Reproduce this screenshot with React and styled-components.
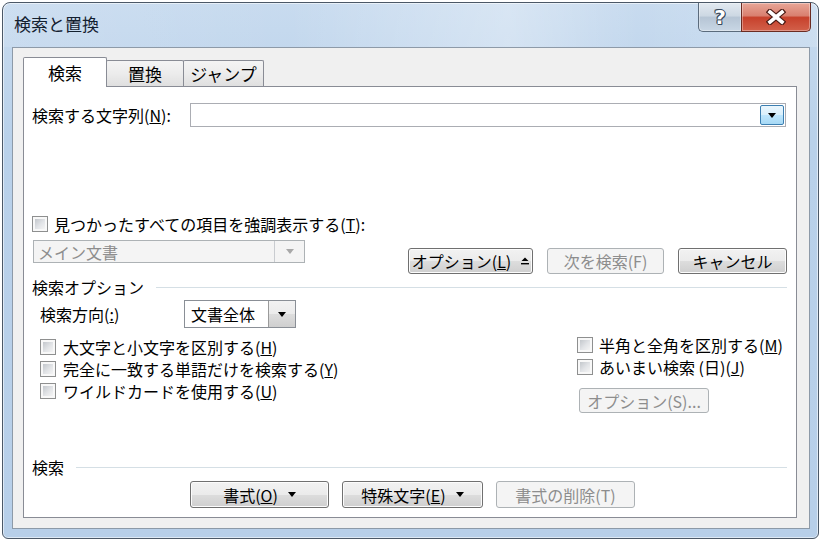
import React from 'react'
import styled, { createGlobalStyle } from 'styled-components'

const GlobalStyle = createGlobalStyle`
  html, body { margin:0; padding:0; background:#fff; }
  body {
    font-family: "Noto Sans CJK JP", "Noto Sans", sans-serif;
    font-size:16px;
    color:#000;
  }
  * { box-sizing:border-box; }
`

const Window = styled.div`
  margin:2px 0 0 2px;
  width:817px;
  height:537px;
  border:1px solid #4b5867;
  border-radius:8px 8px 6px 6px;
  background:linear-gradient(180deg, #c8dbef 0%, #b9d1ea 25%, #b7cfe9 100%);
  box-shadow:inset 0 0 0 1px rgba(255,255,255,0.55);
  display:flex;
  flex-direction:column;
  overflow:hidden;
`
const TitleBar = styled.div`
  height:44px;
  flex:none;
  display:flex;
  align-items:flex-start;
  justify-content:space-between;
  padding:0 7px 0 11px;
  background:linear-gradient(90deg, rgba(255,255,255,0.1) 0%, rgba(255,255,255,0) 35%, rgba(255,255,255,0.3) 62%, rgba(255,255,255,0) 78%, rgba(255,255,255,0.15) 100%);
`
const Title = styled.div`
  margin-top:8px;
  font-size:17px;
  line-height:26px;
  color:#13202f;
`
const CaptionButtons = styled.div`
  display:flex;
`
const CaptionButton = styled.div`
  width:${p => p.$w}px;
  height:29px;
  display:flex;
  align-items:center;
  justify-content:center;
  border:1px solid ${p => p.$close ? '#6b2b22' : '#5b6b7c'};
  border-top:none;
  border-radius:${p => p.$close ? '0 0 5px 0' : '0 0 0 5px'};
  background:${p => p.$close
    ? 'linear-gradient(180deg, #e8a697 0%, #d98070 45%, #c7412c 52%, #d2604a 100%)'
    : 'linear-gradient(180deg, #e2e9f0 0%, #cdd8e3 45%, #b6c5d5 52%, #c9d7e5 100%)'};
  box-shadow:inset 0 0 0 1px rgba(255,255,255,0.35);
  ${p => !p.$close && 'border-right:none;'}
`
const HelpGlyph = styled.span`
  font-family:"DejaVu Sans", sans-serif;
  font-weight:bold;
  font-size:20px;
  line-height:22px;
  color:#fff;
  text-shadow:1px 0 0 #3b4a5c, -1px 0 0 #3b4a5c, 0 1px 0 #3b4a5c, 0 -1px 0 #3b4a5c, 1px 1px 0 #3b4a5c, -1px -1px 0 #3b4a5c;
`

const DialogBody = styled.div`
  flex:1;
  margin:0 8px 9px 9px;
  background:#f0f0f0;
  border:1px solid #8d9aa8;
  padding:9px 12px 10px 10px;
  display:flex;
  flex-direction:column;
`
const TabStrip = styled.div`
  display:flex;
  align-items:flex-end;
  height:30px;
  margin-bottom:-1px;
  position:relative;
  z-index:1;
`
const Tab = styled.div`
  width:${p => p.$w}px;
  height:${p => p.$active ? 30 : 26}px;
  margin-bottom:${p => p.$active ? 0 : 1}px;
  margin-left:${p => p.$first ? 0 : -1}px;
  border:1px solid #898c95;
  border-bottom:none;
  border-radius:2px 2px 0 0;
  background:${p => p.$active ? '#fff' : 'linear-gradient(180deg, #f4f4f4 0%, #ececec 50%, #dfdfdf 100%)'};
  position:relative;
  z-index:${p => p.$active ? 2 : 1};
  display:flex;
  align-items:center;
  justify-content:center;
  font-size:17px;
  line-height:24px;
  padding-top:${p => p.$active ? 0 : 1}px;
`
const TabPanel = styled.div`
  flex:1;
  background:#fff;
  border:1px solid #898c95;
  padding:16px 9px 9px 8px;
  display:flex;
  flex-direction:column;
`

const SearchRow = styled.div`
  display:flex;
  align-items:center;
  height:24px;
`
const FieldLabel = styled.div`
  width:${p => p.$w}px;
  flex:none;
  line-height:24px;
  white-space:nowrap;
`
const TextField = styled.div`
  flex:1;
  height:24px;
  margin-right:1px;
  border:1px solid #abadb3;
  background:#fff;
  display:flex;
  justify-content:flex-end;
  padding:1px;
`
const DropButton = styled.div`
  width:${p => p.$w}px;
  flex:none;
  display:flex;
  align-items:center;
  justify-content:center;
  ${p => p.$hot && `
    border:1px solid #3c7fb1;
    border-radius:2px;
    background:linear-gradient(180deg, #eaf6fd 0%, #d9f0fc 50%, #bee6fd 51%, #a7d9f5 100%);
  `}
  ${p => p.$plain && `
    border-left:1px solid #9a9a9a;
    background:linear-gradient(180deg, #f2f2f2 0%, #ebebeb 50%, #dddddd 51%, #cfcfcf 100%);
  `}
  ${p => p.$disabled && `
    border-left:1px solid #c9ccd0;
    background:#f4f4f4;
  `}
`

const CheckRow = styled.div`
  display:flex;
  align-items:center;
  gap:${p => p.$gap || 6}px;
  height:${p => p.$h || 22}px;
  margin-top:${p => p.$mt || 0}px;
  white-space:nowrap;
  line-height:20px;
`
const CheckBox = styled.span`
  width:16px;
  height:16px;
  flex:none;
  border:1px solid #8e8f8f;
  padding:2px;
  background:linear-gradient(135deg, #c3c7cc 0%, #e2e4e7 55%, #f4f4f4 100%) content-box, #f8f8f8;
`

const ComboRow = styled.div`
  display:flex;
  justify-content:space-between;
  align-items:flex-start;
  margin-top:6px;
`
const Combo = styled.div`
  width:${p => p.$w}px;
  height:${p => p.$h}px;
  margin-left:${p => p.$ml || 0}px;
  display:flex;
  border:1px solid ${p => p.$disabled ? '#adb2b5' : '#8a8f96'};
  background:${p => p.$disabled ? '#f4f4f4' : '#fff'};
  color:${p => p.$disabled ? '#8d8d8d' : '#000'};
`
const ComboText = styled.div`
  flex:1;
  display:flex;
  align-items:center;
  padding-left:${p => p.$pl || 4}px;
  line-height:20px;
`

const ButtonGroup = styled.div`
  display:flex;
  gap:${p => p.$gap || 14}px;
  margin-top:${p => p.$mt || 0}px;
  padding-left:${p => p.$pl || 0}px;
`
const PushButton = styled.div`
  width:${p => p.$w}px;
  height:${p => p.$h || 26}px;
  flex:none;
  display:flex;
  align-items:center;
  justify-content:center;
  gap:10px;
  border:1px solid ${p => p.$disabled ? '#adb2b5' : '#707070'};
  border-radius:3px;
  background:${p => p.$disabled ? '#f4f4f4' : 'linear-gradient(180deg, #f2f2f2 0%, #ebebeb 50%, #dddddd 51%, #cfcfcf 100%)'};
  box-shadow:${p => p.$disabled ? 'none' : 'inset 0 0 0 1px #fcfcfc'};
  color:${p => p.$disabled ? '#8d8d8d' : '#000'};
  line-height:20px;
  white-space:nowrap;
`

const GroupHeader = styled.div`
  display:flex;
  align-items:center;
  gap:12px;
  height:20px;
  margin-top:${p => p.$mt || 0}px;
  line-height:20px;
  &::after {
    content:"";
    flex:1;
    height:1px;
    background:#d5dfe5;
  }
`
const DirectionRow = styled.div`
  display:flex;
  align-items:center;
  height:28px;
  margin-top:3px;
  padding-left:8px;
`
const OptionsArea = styled.div`
  display:flex;
  justify-content:space-between;
  margin-top:8px;
`
const LeftOptions = styled.div`
  display:flex;
  flex-direction:column;
  padding-left:8px;
`
const RightOptions = styled.div`
  width:210px;
  display:flex;
  flex-direction:column;
  margin-top:-2px;
`
const BottomSection = styled.div`
  margin-top:auto;
`

const Triangle = ({ color = '#000', up }) => (
  <svg width="8" height="5" viewBox="0 0 8 5">
    <polygon points={up ? '0,5 8,5 4,0' : '0,0 8,0 4,5'} fill={color} />
  </svg>
)

const CollapseArrow = () => (
  <svg width="8" height="8" viewBox="0 0 8 8">
    <polygon points="0.5,4 7.5,4 4,0.5" fill="#000" />
    <rect x="0" y="6" width="8" height="1.4" fill="#000" />
  </svg>
)

const CloseGlyph = () => (
  <svg width="20" height="16" viewBox="0 0 20 16">
    <path d="M4 3 L16 13 M16 3 L4 13" stroke="#4a1a14" strokeWidth="6" strokeLinecap="square" />
    <path d="M4 3 L16 13 M16 3 L4 13" stroke="#fff" strokeWidth="3.6" strokeLinecap="square" />
  </svg>
)

const Check = ({ children, ...rest }) => (
  <CheckRow {...rest}>
    <CheckBox />
    <span>{children}</span>
  </CheckRow>
)

const App = () => {
  return (
    <>
      <GlobalStyle />
      <Window>
        <TitleBar>
          <Title>検索と置換</Title>
          <CaptionButtons>
            <CaptionButton $w={43}><HelpGlyph>?</HelpGlyph></CaptionButton>
            <CaptionButton $w={70} $close><CloseGlyph /></CaptionButton>
          </CaptionButtons>
        </TitleBar>
        <DialogBody>
          <TabStrip>
            <Tab $w={84} $active $first>検索</Tab>
            <Tab $w={78}>置換</Tab>
            <Tab $w={81}>ジャンプ</Tab>
          </TabStrip>
          <TabPanel>
            <SearchRow>
              <FieldLabel $w={158}>検索する文字列(<u>N</u>):</FieldLabel>
              <TextField>
                <DropButton $w={24} $hot><Triangle /></DropButton>
              </TextField>
            </SearchRow>

            <Check $h={20} $mt={87} $gap={6}>見つかったすべての項目を強調表示する(<u>T</u>):</Check>

            <ComboRow>
              <Combo $w={272} $h={23} $ml={1} $disabled>
                <ComboText $pl={4}>メイン文書</ComboText>
                <DropButton $w={30} $disabled><Triangle color="#a8a8a8" /></DropButton>
              </Combo>
              <ButtonGroup $mt={8}>
                <PushButton $w={125}>
                  <span>オプション(<u>L</u>)</span>
                  <CollapseArrow />
                </PushButton>
                <PushButton $w={117} $disabled>次を検索(F)</PushButton>
                <PushButton $w={109}>キャンセル</PushButton>
              </ButtonGroup>
            </ComboRow>

            <GroupHeader $mt={3}>検索オプション</GroupHeader>
            <DirectionRow>
              <FieldLabel $w={144}>検索方向(<u>:</u>)</FieldLabel>
              <Combo $w={112} $h={28}>
                <ComboText $pl={6}>文書全体</ComboText>
                <DropButton $w={27} $plain><Triangle /></DropButton>
              </Combo>
            </DirectionRow>

            <OptionsArea>
              <LeftOptions>
                <Check $gap={7}>大文字と小文字を区別する(<u>H</u>)</Check>
                <Check $gap={7}>完全に一致する単語だけを検索する(<u>Y</u>)</Check>
                <Check $gap={7}>ワイルドカードを使用する(<u>U</u>)</Check>
              </LeftOptions>
              <RightOptions>
                <Check $gap={6}>半角と全角を区別する(<u>M</u>)</Check>
                <Check $gap={6}>あいまい検索 (日)(<u>J</u>)</Check>
                <ButtonGroup $mt={10} $pl={2}>
                  <PushButton $w={130} $h={25} $disabled>オプション(S)...</PushButton>
                </ButtonGroup>
              </RightOptions>
            </OptionsArea>

            <BottomSection>
              <GroupHeader>検索</GroupHeader>
              <ButtonGroup $mt={4} $pl={158} $gap={13}>
                <PushButton $w={139} $h={27}>
                  <span>書式(<u>O</u>)</span>
                  <Triangle />
                </PushButton>
                <PushButton $w={141} $h={27}>
                  <span>特殊文字(<u>E</u>)</span>
                  <Triangle />
                </PushButton>
                <PushButton $w={139} $h={27} $disabled>書式の削除(T)</PushButton>
              </ButtonGroup>
            </BottomSection>
          </TabPanel>
        </DialogBody>
      </Window>
    </>
  )
}

export default App
